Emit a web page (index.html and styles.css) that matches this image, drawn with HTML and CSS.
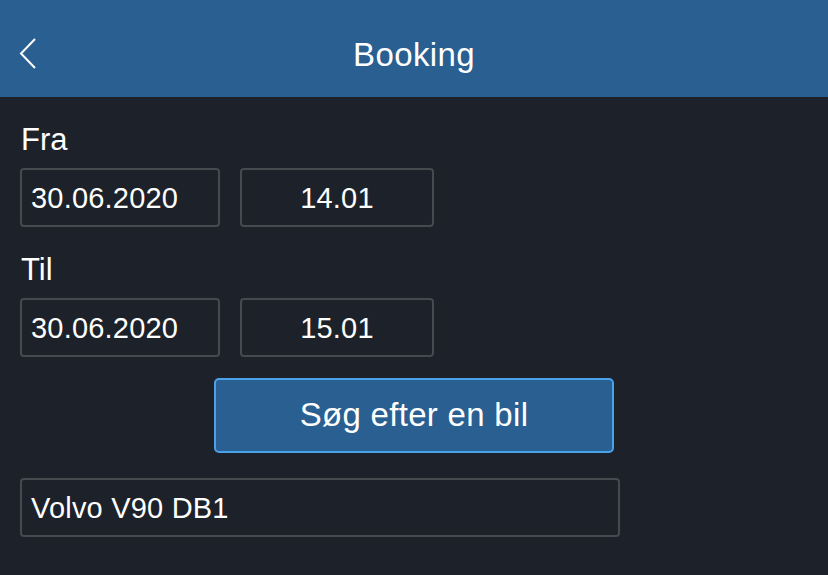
FILE: index.html
```html
<!DOCTYPE html>
<html lang="da">
<head>
<meta charset="utf-8">
<title>Booking</title>
<link rel="stylesheet" href="styles.css">
</head>
<body>
<header class="navbar">
  <button class="back" aria-label="Tilbage">
    <svg width="20" height="34" viewBox="0 0 20 34"><polyline points="16,2 2,16.5 16,31" fill="none" stroke="#ffffff" stroke-width="2"/></svg>
  </button>
  <h1 class="title">Booking</h1>
</header>
<main class="content">
  <section class="group">
    <div class="label">Fra</div>
    <div class="row">
      <div class="field date">30.06.2020</div>
      <div class="field time">14.01</div>
    </div>
  </section>
  <section class="group">
    <div class="label">Til</div>
    <div class="row">
      <div class="field date">30.06.2020</div>
      <div class="field time">15.01</div>
    </div>
  </section>
  <div class="actions">
    <button class="search">Søg efter en bil</button>
  </div>
  <div class="field car">Volvo V90 DB1</div>
</main>
</body>
</html>
```

FILE: styles.css
```css
html, body {
  margin: 0;
  padding: 0;
  background: #1d222a;
  height: 100%;
}
body {
  font-family: "Liberation Sans", Arial, sans-serif;
  color: #ffffff;
  width: 828px;
  overflow: hidden;
}
.navbar {
  box-sizing: border-box;
  height: 97px;
  padding-top: 35px;
  background: #295f91;
  display: flex;
  align-items: flex-start;
  justify-content: center;
  position: relative;
}
.back {
  position: absolute;
  left: 19px;
  top: 37px;
  background: none;
  border: 0;
  padding: 0;
  width: 20px;
  height: 34px;
  display: block;
}
.back svg { display: block; }
.title {
  margin: 0;
  font-weight: normal;
  font-size: 33px;
  line-height: 40px;
  letter-spacing: 0.4px;
}
.content {
  padding: 25px 0 0 20px;
  display: flex;
  flex-direction: column;
}
.group {
  display: flex;
  flex-direction: column;
  gap: 10px;
  margin-bottom: 25px;
}
.group + .group { margin-bottom: 21px; }
.label {
  font-size: 31px;
  line-height: 36px;
  padding-left: 1px;
}
.row {
  display: flex;
  gap: 20px;
}
.field {
  box-sizing: border-box;
  height: 59px;
  border: 2px solid #46494e;
  border-radius: 4px;
  font-size: 29px;
  display: flex;
  align-items: center;
  padding: 1px 0 0 9px;
  letter-spacing: 0.2px;
}
.date { width: 200px; }
.time {
  width: 194px;
  justify-content: center;
  padding-left: 0;
}
.actions {
  display: flex;
  justify-content: center;
  margin-left: -20px;
  margin-bottom: 25px;
}
.search {
  box-sizing: border-box;
  width: 400px;
  height: 75px;
  background: #295f91;
  border: 2px solid #4ba2e8;
  border-radius: 5px;
  color: #ffffff;
  font-family: "Liberation Sans", Arial, sans-serif;
  font-size: 33px;
  padding: 0 0 2px 0;
  letter-spacing: 0.3px;
}
.car {
  width: 600px;
}
```
